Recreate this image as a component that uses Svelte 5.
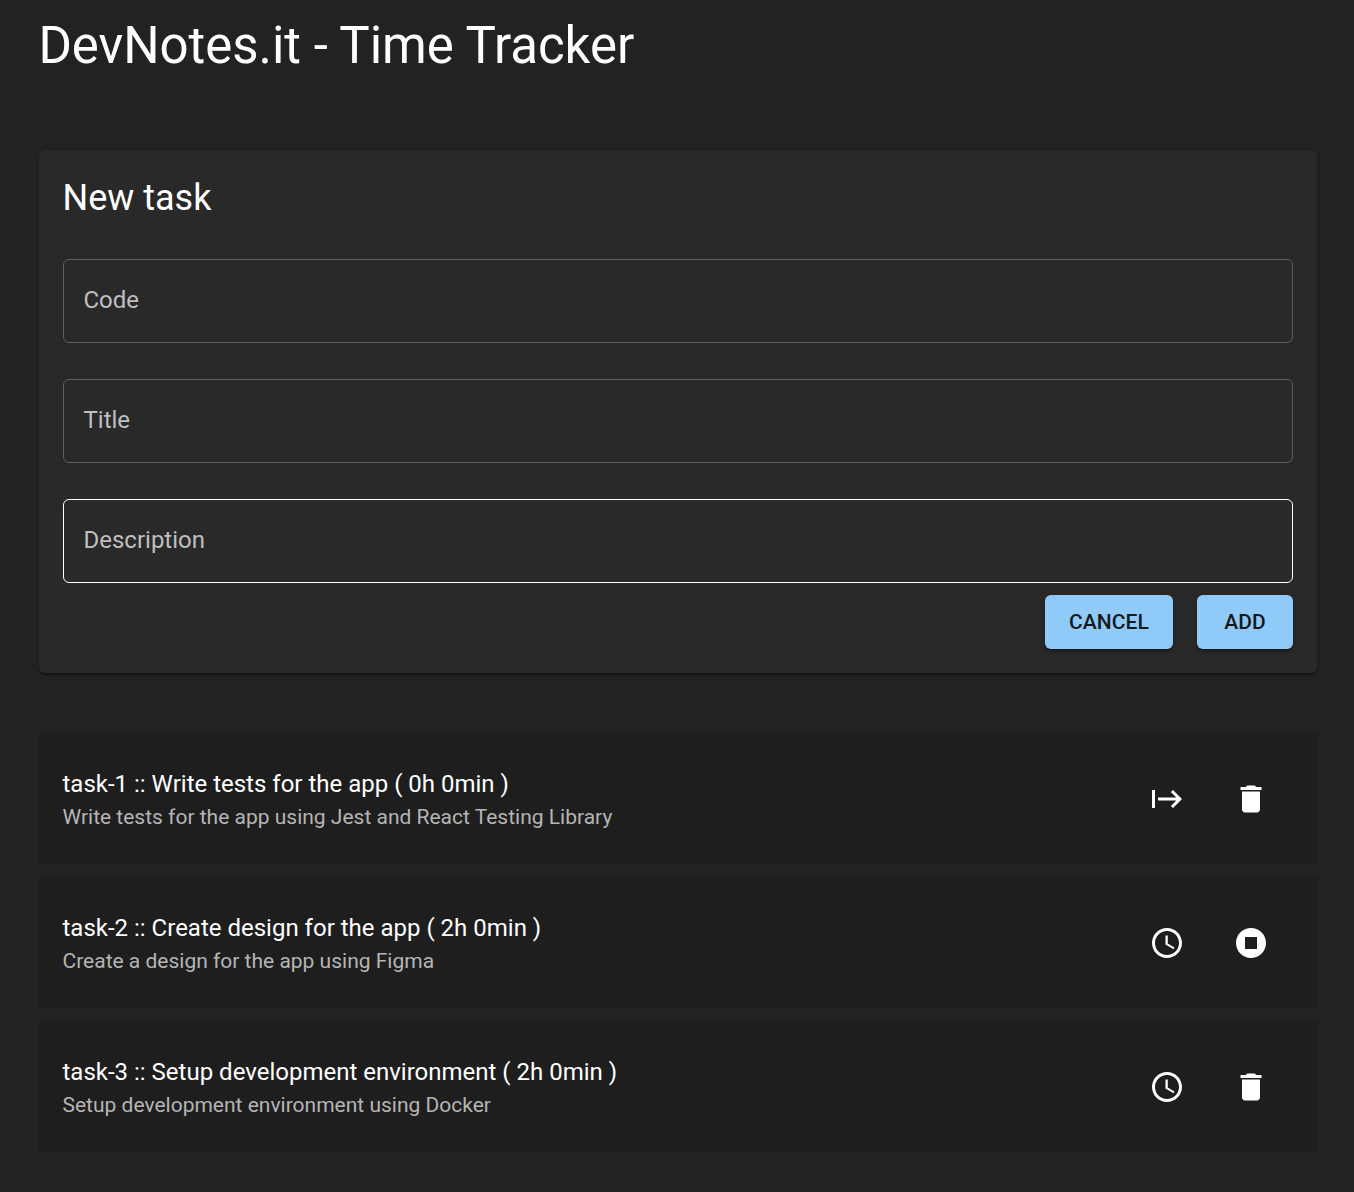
<script>
  const fields = [
    { label: 'Code' },
    { label: 'Title' },
    { label: 'Description', active: true }
  ];

  const tasks = [
    {
      title: 'task-1 :: Write tests for the app ( 0h 0min )',
      description: 'Write tests for the app using Jest and React Testing Library',
      actions: ['start', 'delete']
    },
    {
      title: 'task-2 :: Create design for the app ( 2h 0min )',
      description: 'Create a design for the app using Figma',
      actions: ['clock', 'stop']
    },
    {
      title: 'task-3 :: Setup development environment ( 2h 0min )',
      description: 'Setup development environment using Docker',
      actions: ['clock', 'delete']
    }
  ];

  const icons = {
    start: 'M16 6l-1.41 1.41L18.17 11H6v2h12.17l-3.59 3.59L16 18l6-6zM2 6v12h2V6z',
    delete: 'M6 19c0 1.1.9 2 2 2h8c1.1 0 2-.9 2-2V7H6v12zM19 4h-3.5l-1-1h-5l-1 1H5v2h14V4z',
    clock:
      'M11.99 2C6.47 2 2 6.48 2 12s4.47 10 9.99 10C17.52 22 22 17.52 22 12S17.52 2 11.99 2zM12 20c-4.42 0-8-3.58-8-8s3.58-8 8-8 8 3.58 8 8-3.58 8-8 8zM12.5 7H11v6l5.25 3.15.75-1.23-4.5-2.67z',
    stop: 'M12 2C6.48 2 2 6.48 2 12s4.48 10 10 10 10-4.48 10-10S17.52 2 12 2zm4 14H8V8h8v8z'
  };
</script>

<main>
  <h1>DevNotes.it - Time Tracker</h1>

  <section class="card">
    <h2>New task</h2>
    <div class="fields">
      {#each fields as field}
        <div class="field" class:active={field.active}>{field.label}</div>
      {/each}
    </div>
    <div class="buttons">
      <button type="button">Cancel</button>
      <button type="button">Add</button>
    </div>
  </section>

  <ul>
    {#each tasks as task}
      <li>
        <div class="text">
          <p class="title">{task.title}</p>
          <p class="description">{task.description}</p>
        </div>
        <div class="actions">
          {#each task.actions as action}
            <button type="button" class="icon" aria-label={action}>
              <svg viewBox="0 0 24 24"><path d={icons[action]} /></svg>
            </button>
          {/each}
        </div>
      </li>
    {/each}
  </ul>
</main>

<style>
  :global(body) {
    margin: 0;
    background: #222222;
  }

  main {
    box-sizing: border-box;
    min-height: 1192px;
    padding: 14px 37px 39px 39px;
    color: #fff;
    font-family: Roboto, 'Liberation Sans', sans-serif;
  }

  h1,
  h2,
  p,
  ul {
    margin: 0;
    padding: 0;
    font-weight: 400;
  }

  h1 {
    margin-left: -0.6px;
    font-size: 51px;
    line-height: 63px;
    letter-spacing: -0.03px;
  }

  .card {
    box-sizing: border-box;
    height: 523px;
    margin-top: 73px;
    padding: 24px;
    border-radius: 6px;
    background: #292929;
    box-shadow:
      0 3px 1.5px -1.5px rgba(0, 0, 0, 0.2),
      0 1.5px 1.5px rgba(0, 0, 0, 0.14),
      0 1.5px 4.5px rgba(0, 0, 0, 0.12);
  }

  h2 {
    margin-left: -0.5px;
    font-size: 36px;
    line-height: 48px;
  }

  .fields {
    display: grid;
    gap: 36px;
    margin-top: 37px;
  }

  .field {
    box-sizing: border-box;
    height: 84px;
    padding: 22px 19.5px;
    border: 1px solid #5e5e5e;
    border-radius: 6px;
    color: #bfbfbf;
    font-size: 24px;
    line-height: 36px;
  }

  .field.active {
    border-color: #fff;
  }

  .buttons {
    display: flex;
    justify-content: flex-end;
    gap: 24px;
    margin-top: 12px;
  }

  .buttons button {
    height: 54px;
    min-width: 96px;
    padding: 0 24px;
    border: 0;
    border-radius: 6px;
    background: #90caf9;
    color: #121a20;
    font-family: inherit;
    font-size: 21px;
    font-weight: 500;
    letter-spacing: 0.1px;
    text-transform: uppercase;
    box-shadow:
      0 4.5px 1.5px -3px rgba(0, 0, 0, 0.2),
      0 3px 3px rgba(0, 0, 0, 0.14),
      0 1.5px 7.5px rgba(0, 0, 0, 0.12);
  }

  ul {
    display: grid;
    gap: 12px;
    margin-top: 60px;
    list-style: none;
  }

  li {
    box-sizing: border-box;
    display: flex;
    align-items: center;
    justify-content: space-between;
    height: 132px;
    padding: 0 36px 0 23.5px;
    background: #1e1e1e;
  }

  .title {
    font-size: 24px;
    line-height: 36px;
  }

  .description {
    color: #b5b5b5;
    font-size: 21px;
    line-height: 30px;
  }

  .actions {
    display: flex;
    gap: 24px;
  }

  .icon {
    display: flex;
    padding: 12px;
    border: 0;
    background: none;
  }

  svg {
    width: 36px;
    height: 36px;
    fill: #fff;
  }
</style>
